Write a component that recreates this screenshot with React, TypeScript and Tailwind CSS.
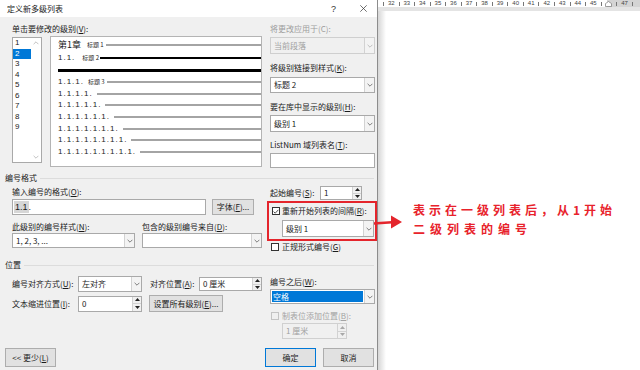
import React from "react";

const Chev = ({ c = "#606060" }: { c?: string }) => (
  <svg width="6" height="4" viewBox="0 0 6 4">
    <path d="M0.6 0.8 L3 3.2 L5.4 0.8" fill="none" stroke={c} strokeWidth="0.8" />
  </svg>
);

const Tri = ({ up, c = "#222" }: { up?: boolean; c?: string }) => (
  <svg width="5" height="3" viewBox="0 0 5 3">
    <polygon points={up ? "0,3 2.5,0 5,3" : "0,0 2.5,3 5,0"} fill={c} />
  </svg>
);

function Drop({
  text,
  cls,
  disabled,
  highlight,
}: {
  text: string;
  cls: string;
  disabled?: boolean;
  highlight?: boolean;
}) {
  return (
    <div
      className={`flex border ${
        disabled ? "border-[#cfcfcf] bg-[#f0f0f0] text-[#a0a0a0]" : "border-[#a9a9a9] bg-white"
      } ${cls}`}
    >
      {highlight ? (
        <div className="flex-1 flex p-[1px]">
          <div className="flex-1 flex items-center pl-[1px] bg-[#0078d7] text-white">{text}</div>
        </div>
      ) : (
        <div className="flex-1 flex items-center pl-[3px] whitespace-nowrap">{text}</div>
      )}
      <div className="w-[10px] flex items-center justify-center border-l border-[#d2d2d2] bg-[#f3f3f3]">
        <Chev c={disabled ? "#b0b0b0" : "#606060"} />
      </div>
    </div>
  );
}

function Spin({ text, cls, disabled }: { text: string; cls: string; disabled?: boolean }) {
  return (
    <div
      className={`flex border ${
        disabled ? "border-[#d0d0d0] bg-[#f0f0f0] text-[#a0a0a0]" : "border-[#a9a9a9] bg-white"
      } ${cls}`}
    >
      <div className="flex-1 flex items-center pl-[3px] whitespace-nowrap">{text}</div>
      <div className="w-[9px] flex flex-col border-l border-[#d2d2d2] bg-[#f0f0f0]">
        <div className="flex-1 flex items-center justify-center border-b border-[#d2d2d2]">
          <Tri up c={disabled ? "#a8a8a8" : "#222"} />
        </div>
        <div className="flex-1 flex items-center justify-center">
          <Tri c={disabled ? "#a8a8a8" : "#222"} />
        </div>
      </div>
    </div>
  );
}

function Check({ checked, disabled }: { checked?: boolean; disabled?: boolean }) {
  return (
    <div
      className={`w-[8px] h-[8px] border flex items-center justify-center ${
        disabled ? "border-[#c4c4c4] bg-[#f0f0f0]" : "border-[#333333] bg-white"
      }`}
    >
      {checked && (
        <svg width="6" height="5" viewBox="0 0 6 5">
          <path d="M0.6 2.6 L2.2 4.2 L5.4 0.8" fill="none" stroke="#222" strokeWidth="0.8" />
        </svg>
      )}
    </div>
  );
}

function Btn({ children, cls }: { children: React.ReactNode; cls: string }) {
  return (
    <div className={`flex items-center justify-center border bg-[#e1e1e1] whitespace-nowrap ${cls}`}>
      {children}
    </div>
  );
}

const U = ({ t }: { t: string }) => <span className="underline underline-offset-[1px]">{t}</span>;

function Header({ text }: { text: string }) {
  return (
    <div className="h-[10px] flex items-center pl-[5px] pr-[3px]">
      <span>{text}</span>
      <div className="flex-1 h-px bg-[#dcdcdc] ml-[3px]" />
    </div>
  );
}

const levels = [
  "1.1.1.",
  "1.1.1.1.",
  "1.1.1.1.1.",
  "1.1.1.1.1.1.",
  "1.1.1.1.1.1.1.",
  "1.1.1.1.1.1.1.1.",
  "1.1.1.1.1.1.1.1.1.",
];

const rulerNums = [32, 33, 34, 35, 36, 37, 38, 39, 40, 41, 42, 43, 44, 45];

export default function App() {
  return (
    <div className="relative flex w-[640px] h-[370px] overflow-hidden bg-white">
      {/* Dialog */}
      <div className="w-[378px] h-full flex flex-col bg-[#f0f0f0] border-r border-[#8c8c8c] text-[8px] leading-[10px] text-[#1b1b1b] font-['Noto_Sans_CJK_SC',sans-serif]">
        {/* title bar */}
        <div className="h-[17px] shrink-0 bg-white flex items-center pl-[7px]">
          <span>定义新多级列表</span>
          <span className="ml-auto mr-[24px] text-[9px] font-['Liberation_Sans',sans-serif] text-[#333]">?</span>
          <svg className="mr-[10px]" width="7" height="7" viewBox="0 0 7 7">
            <path d="M0.3 0.3 L6.7 6.7 M6.7 0.3 L0.3 6.7" stroke="#333" strokeWidth="0.7" />
          </svg>
        </div>

        {/* top section */}
        <div className="flex pl-[12px] pt-[7px]">
          <div className="w-[250px] flex flex-col">
            <div>
              单击要修改的级别(<U t="V" />):
            </div>
            <div className="flex mt-[2px]">
              <div className="mt-[1px] w-[30px] h-[126px] border border-[#a9a9a9] bg-white flex">
                <div className="flex-1 flex flex-col font-['Liberation_Sans',sans-serif]">
                  {[1, 2, 3, 4, 5, 6, 7, 8, 9].map((n) => (
                    <div
                      key={n}
                      className={`h-[10.5px] flex items-center pl-[2px] ${
                        n === 2 ? "bg-[#0078d7] text-white" : ""
                      }`}
                    >
                      {n}
                    </div>
                  ))}
                </div>
                <div className="w-[10px] flex flex-col justify-between items-center py-[3px]">
                  <div className="rotate-180">
                    <Chev c="#b4b4b4" />
                  </div>
                  <Chev c="#b4b4b4" />
                </div>
              </div>
              <div className="ml-[8px] w-[212px] h-[131px] border border-[#b4b4b4] bg-white flex flex-col pt-[2px] pl-[7px]">
                <div className="h-[12px] flex items-center">
                  <span className="text-[9px] leading-[12px]">第1章</span>
                  <span className="text-[6px] leading-[8px] ml-[6px]">标题 1</span>
                  <div className="flex-1 h-[2px] bg-[#a4a4a4] ml-[2px]" />
                </div>
                <div className="h-[13px] flex items-center">
                  <span className="font-['Liberation_Sans',sans-serif] tracking-[1px]">1.1.</span>
                  <span className="text-[6px] leading-[8px] ml-[7px]">标题 2</span>
                  <div className="flex-1 h-[2px] bg-black ml-[1px]" />
                </div>
                <div className="h-[12px] flex items-center">
                  <div className="flex-1 h-[3px] bg-black" />
                </div>
                {levels.map((l, i) => (
                  <div key={l} className="h-[11.7px] flex items-center">
                    <span className="font-['Liberation_Sans',sans-serif] tracking-[1px]">{l}</span>
                    {i === 0 && <span className="text-[6px] leading-[8px] ml-[4px]">标题 3</span>}
                    <div className={`flex-1 h-[2px] bg-[#a4a4a4] ${i === 0 ? "ml-[2px]" : "ml-[4px]"}`} />
                  </div>
                ))}
              </div>
            </div>
          </div>
          <div className="ml-[8px] w-[105px] flex flex-col">
            <div className="text-[#9d9d9d]">将更改应用于(C):</div>
            <Drop cls="mt-[3px] h-[17px]" text="当前段落" disabled />
            <div className="mt-[9px]">
              将级别链接到样式(<U t="K" />):
            </div>
            <Drop cls="mt-[4px] h-[16px]" text="标题 2" />
            <div className="mt-[9px]">
              要在库中显示的级别(<U t="H" />):
            </div>
            <Drop cls="mt-[3px] h-[17px]" text="级别 1" />
            <div className="mt-[8px]">
              ListNum 域列表名(<U t="T" />):
            </div>
            <div className="mt-[3px] h-[15px] border border-[#a9a9a9] bg-white" />
          </div>
        </div>

        <div className="mt-[5px]">
          <Header text="编号格式" />
        </div>

        {/* middle section */}
        <div className="flex pl-[12px]">
          <div className="w-[250px] flex flex-col">
            <div className="mt-[4px]">
              输入编号的格式(<U t="O" />):
            </div>
            <div className="mt-[2px] flex h-[16px]">
              <div className="w-[194px] border border-[#a9a9a9] bg-white flex items-center pl-[1px] font-['Liberation_Sans',sans-serif] text-[9px]">
                <span className="bg-[#d6d6d6] leading-[12px] px-[1px]">1.1</span>
                <span>.</span>
              </div>
              <Btn cls="ml-[6px] w-[42px] border-[#adadad]">
                字体(<U t="F" />)...
              </Btn>
            </div>
            <div className="mt-[7px] flex">
              <div className="w-[130px]">
                此级别的编号样式(<U t="N" />):
              </div>
              <div>
                包含的级别编号来自(<U t="D" />):
              </div>
            </div>
            <div className="mt-[1px] flex">
              <Drop cls="w-[123px] h-[15px]" text="1, 2, 3, ..." />
              <Drop cls="ml-[7px] w-[120px] h-[15px]" text="" />
            </div>
          </div>
          <div className="ml-[5px] w-[113px] flex flex-col">
            <div className="mt-[3px] h-[14px] flex items-center pl-[3px]">
              <span className="w-[50px] whitespace-nowrap">
                起始编号(<U t="S" />):
              </span>
              <Spin cls="w-[42px] h-[14px]" text="1" />
            </div>
            <div className="relative z-10 mt-[1px] h-[40px] border-2 border-[#e4252c] flex flex-col pl-[3px]">
              <div className="mt-[4px] h-[8px] flex items-center">
                <Check checked />
                <span className="ml-[2px] whitespace-nowrap">
                  重新开始列表的间隔(<U t="R" />):
                </span>
              </div>
              <div className="mt-[5px] ml-[10px]">
                <Drop cls="w-[92px] h-[17px]" text="级别 1" />
              </div>
            </div>
            <div className="mt-[2px] h-[8px] flex items-center pl-[4px]">
              <Check />
              <span className="ml-[3px]">
                正规形式编号(<U t="G" />)
              </span>
            </div>
          </div>
        </div>

        <div className="mt-[9px]">
          <Header text="位置" />
        </div>

        {/* bottom section */}
        <div className="flex pl-[12px]">
          <div className="w-[250px] flex flex-col">
            <div className="mt-[6px] h-[16px] flex items-center">
              <span className="w-[66px] whitespace-nowrap">
                编号对齐方式(<U t="U" />):
              </span>
              <Drop cls="w-[64px] h-[16px]" text="左对齐" />
              <span className="ml-[8px] w-[49px] whitespace-nowrap">
                对齐位置(<U t="A" />):
              </span>
              <Spin cls="w-[63px] h-[14px]" text="0 厘米" />
            </div>
            <div className="mt-[3px] h-[17px] flex items-center">
              <span className="w-[66px] whitespace-nowrap">
                文本缩进位置(<U t="I" />):
              </span>
              <Spin cls="w-[64px] h-[16px]" text="0" />
              <Btn cls="ml-[7px] w-[74px] h-[17px] border-[#adadad]">
                设置所有级别(<U t="E" />)...
              </Btn>
            </div>
          </div>
          <div className="ml-[8px] w-[105px] flex flex-col">
            <div className="mt-[7px]">
              编号之后(<U t="W" />):
            </div>
            <Drop cls="mt-[2px] h-[15px]" text="空格" highlight />
            <div className="mt-[8px] h-[8px] flex items-center pl-[1px]">
              <Check disabled />
              <span className="ml-[3px] text-[#a3a3a3] whitespace-nowrap">
                制表位添加位置(<U t="B" />):
              </span>
            </div>
            <div className="mt-[3px] ml-[12px]">
              <Spin cls="w-[65px] h-[16px]" text="1 厘米" disabled />
            </div>
          </div>
        </div>

        {/* buttons */}
        <div className="mt-[9px] flex h-[19px] pl-[5px]">
          <Btn cls="w-[51px] border-[#adadad]">
            &lt;&lt; 更少(<U t="L" />)
          </Btn>
          <Btn cls="ml-[209px] w-[51px] border-[#0078d7]">确定</Btn>
          <Btn cls="ml-[7px] w-[51px] border-[#adadad]">取消</Btn>
        </div>
      </div>

      {/* Right document area */}
      <div className="flex-1 flex flex-col bg-white">
        <div className="h-[11px] shrink-0 flex flex-col">
          <div className="h-[7px] flex items-center pl-[5px] bg-[linear-gradient(to_right,#ffffff_229px,#d4d4d4_229px)] font-['Liberation_Sans',sans-serif] text-[6px] leading-[7px] text-[#444]">
            {rulerNums.map((n) => (
              <div key={n} className="w-[15.55px] shrink-0 flex items-center">
                <div className="w-px h-[4px] bg-[#777]" />
                <span className="flex-1 text-center">{n}</span>
              </div>
            ))}
            <div className="w-[15.55px] shrink-0 flex items-center">
              <div className="w-px h-[4px] bg-[#777]" />
              <div className="flex-1 flex justify-center">
                <svg width="7" height="6" viewBox="0 0 7 6">
                  <path d="M0.5 5.5 V2.6 L3.5 0.5 L6.5 2.6 V5.5 Z" fill="#fff" stroke="#777" strokeWidth="0.7" />
                </svg>
              </div>
            </div>
            <div className="w-[15.55px] shrink-0 flex items-center">
              <div className="w-px h-[4px] bg-[#777]" />
              <span className="flex-1 text-center">47</span>
            </div>
            <div className="w-px h-[4px] bg-[#777]" />
          </div>
          <div className="h-[4px] bg-[#e4e4e4]" />
        </div>
        <div className="flex-1 flex">
          <div className="w-[8px] bg-gradient-to-r from-[#d6d6d6] to-white" />
          <div className="flex-1 pl-[27px] pt-[189px] text-[12px] leading-[19px] text-[#e8222b] font-bold font-['Noto_Sans_CJK_SC',sans-serif] whitespace-nowrap">
            <div className="tracking-[4px]">表示在一级列表后，从1开始</div>
            <div className="tracking-[5px]">二级列表的编号</div>
          </div>
        </div>
      </div>

      {/* red arrow annotation */}
      <svg className="absolute left-[350px] top-[212px]" width="56" height="20" viewBox="0 0 56 20">
        <path d="M5 12.8 L42 10.2" stroke="#e4252c" strokeWidth="2.6" fill="none" />
        <polygon points="41,3.5 52,10 41,16.5" fill="#e4252c" />
      </svg>
    </div>
  );
}
